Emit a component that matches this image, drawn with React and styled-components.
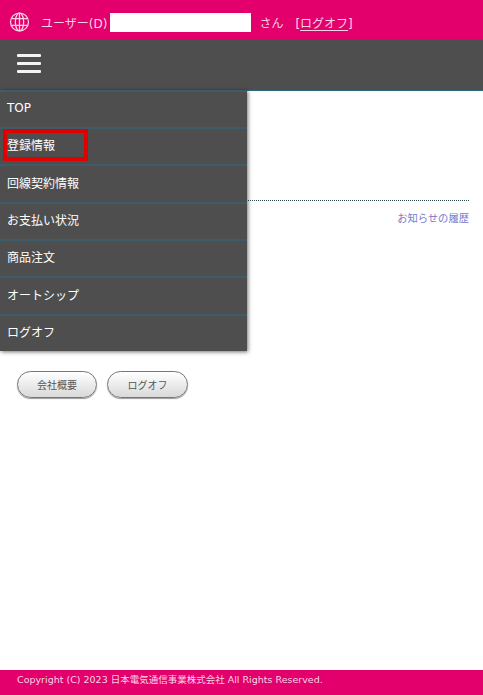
import React from "react";
import styled, { createGlobalStyle } from "styled-components";

const Global = createGlobalStyle`
  html, body { margin: 0; padding: 0; background: #fff; }
  body { font-family: "DejaVu Sans", "Noto Sans CJK JP", sans-serif; }
  * { box-sizing: border-box; }
`;

const Page = styled.div`
  position: relative;
  width: 483px;
  height: 695px;
  display: flex;
  flex-direction: column;
  overflow: hidden;
`;

const Header = styled.header`
  height: 40px;
  flex: none;
  background: #e4006c;
  color: #f7d4e5;
  display: flex;
  align-items: flex-start;
  padding: 12px 0 0 9px;
  font-size: 12px;
  line-height: 25px;
`;

const Globe = styled.svg`
  width: 21px;
  height: 20px;
  margin-right: 11px;
  flex: none;
`;

const NameBox = styled.div`
  width: 141px;
  height: 19px;
  background: #fff;
  margin: 1px 8px 0 3px;
`;

const Suffix = styled.span`
  margin-right: 12px;
`;

const LogoffLink = styled.span`
  u { text-underline-offset: 2px; }
`;

const NavBar = styled.nav`
  height: 51px;
  flex: none;
  background: #4e4e4e;
  border-bottom: 1px solid #2c6a80;
  display: flex;
  padding: 14px 0 0 17px;
`;

const Burger = styled.div`
  width: 24px;
  display: flex;
  flex-direction: column;
  gap: 5px;
  span {
    height: 3px;
    background: #f4f4f4;
    border-radius: 1px;
  }
`;

const Menu = styled.ul`
  position: absolute;
  top: 90px;
  left: 0;
  width: 247px;
  margin: 0;
  padding: 0;
  list-style: none;
  background: #4e4e4e;
  box-shadow: 1px 1px 4px rgba(0, 0, 0, 0.55);
  z-index: 2;
`;

const MenuItem = styled.li`
  height: ${(p) => p.$h}px;
  display: flex;
  align-items: center;
  padding: 0 0 4px 7px;
  color: #fff;
  font-size: 12px;
  border-top: 2px solid #3d5b68;
`;

const Highlight = styled.div`
  position: absolute;
  top: 129px;
  left: 3px;
  width: 85px;
  height: 32px;
  border: 4px solid #e00000;
  z-index: 3;
`;

const Content = styled.main`
  flex: 1;
  display: flex;
  flex-direction: column;
  padding: 109px 14px 0 17px;
`;

const Rule = styled.div`
  border-top: 1px dotted #2e4a4a;
`;

const HistoryLink = styled.div`
  margin-top: 9px;
  height: 16px;
  line-height: 16px;
  text-align: right;
  font-size: 10.3px;
  color: #7a7ac8;
`;

const Buttons = styled.div`
  margin-top: 145px;
  display: flex;
  gap: 10px;
`;

const PillButton = styled.div`
  width: ${(p) => p.$w}px;
  height: 27px;
  border: 1px solid #777;
  border-radius: 14px;
  background: linear-gradient(#ffffff, #d9d9d9);
  box-shadow: 0 1px 1px rgba(0, 0, 0, 0.4);
  display: flex;
  align-items: center;
  justify-content: center;
  font-size: 10px;
  color: #555;
`;

const Footer = styled.footer`
  height: 25px;
  flex: none;
  background: #e4006c;
  color: #f7d4e5;
  font-size: 9.5px;
  padding-left: 17px;
  padding-top: 3px;
  line-height: 13px;
  white-space: nowrap;
`;

const items = [
  ["TOP", 37],
  ["登録情報", 37],
  ["回線契約情報", 38],
  ["お支払い状況", 37],
  ["商品注文", 37],
  ["オートシップ", 38],
  ["ログオフ", 37],
];

export default function App() {
  return (
    <Page>
      <Global />
      <Header>
        <Globe viewBox="0 0 24 24" fill="none" stroke="#f7d4e5" strokeWidth="1.5">
          <circle cx="12" cy="12" r="10.8" />
          <ellipse cx="12" cy="12" rx="5" ry="10.8" />
          <path d="M12 1.2v21.6M2.5 8h19M2.5 16h19" />
        </Globe>
        <span>ユーザー(D)</span>
        <NameBox />
        <Suffix>さん</Suffix>
        <LogoffLink>[<u>ログオフ</u>]</LogoffLink>
      </Header>
      <NavBar>
        <Burger><span /><span /><span /></Burger>
      </NavBar>
      <Menu>
        {items.map(([t, h]) => <MenuItem key={t} $h={h}>{t}</MenuItem>)}
      </Menu>
      <Highlight />
      <Content>
        <Rule />
        <HistoryLink>お知らせの履歴</HistoryLink>
        <Buttons>
          <PillButton $w={80}>会社概要</PillButton>
          <PillButton $w={81}>ログオフ</PillButton>
        </Buttons>
      </Content>
      <Footer>Copyright (C) 2023 日本電気通信事業株式会社 All Rights Reserved.</Footer>
    </Page>
  );
}
